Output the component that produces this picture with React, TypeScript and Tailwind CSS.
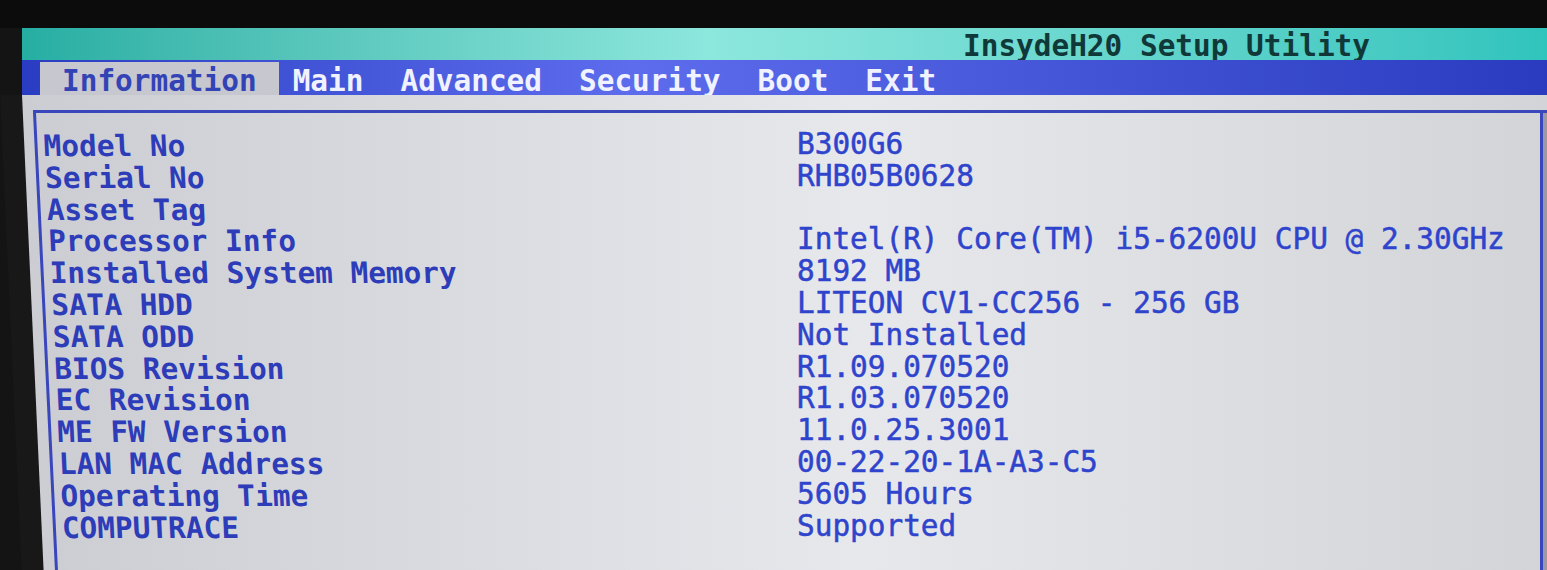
const rows: [string, string][] = [
  ['Model No', 'B300G6'],
  ['Serial No', 'RHB05B0628'],
  ['Asset Tag', ''],
  ['Processor Info', 'Intel(R) Core(TM) i5-6200U CPU @ 2.30GHz'],
  ['Installed System Memory', '8192 MB'],
  ['SATA HDD', 'LITEON CV1-CC256 - 256 GB'],
  ['SATA ODD', 'Not Installed'],
  ['BIOS Revision', 'R1.09.070520'],
  ['EC Revision', 'R1.03.070520'],
  ['ME FW Version', '11.0.25.3001'],
  ['LAN MAC Address', '00-22-20-1A-A3-C5'],
  ['Operating Time', '5605 Hours'],
  ['COMPUTRACE', 'Supported'],
];

const tabs = ['Main', 'Advanced', 'Security', 'Boot', 'Exit'];

export default function App() {
  return (
    <div className="w-[1547px] h-[570px] overflow-hidden bg-[#141414] flex flex-col font-['DejaVu_Sans_Mono',monospace] text-[29.4px] whitespace-pre">
      <div className="h-[28px] shrink-0 bg-[#0c0c0c]" />

      {/* title + menu bar */}
      <div className="ml-[22px] flex flex-col shrink-0">
        <div className="h-[32px] flex items-center pt-[5px] pl-[941px] bg-gradient-to-r from-[#25aea3] via-[#8ce7dd] via-45% to-[#2fc4bd] text-[#103838] font-bold leading-none">
          InsydeH20 Setup Utility
        </div>
        <nav className="h-[35px] flex items-stretch pl-[18px] bg-gradient-to-r from-[#2a3dc2] via-[#5d6ced] via-40% to-[#2a3bbf] font-bold leading-none">
          <div className="flex items-center pt-[6px] px-[22px] mt-[2px] bg-[#c6c7cf] text-[#3343b6]">Information</div>
          <div className="flex items-center pt-[8px] gap-[37px] ml-[14px] text-[#f1f2ff]">
            {tabs.map((t) => (
              <span key={t}>{t}</span>
            ))}
          </div>
        </nav>
      </div>

      {/* info panel */}
      <div className="flex flex-1 min-h-0">
        <div className="w-[22px] shrink-0 bg-[#181818] origin-top skew-x-[2.6deg]" />
        <div className="flex-1 flex flex-col pt-[15px] bg-gradient-to-r from-[#cbcdd2] via-[#e7e8ec] via-55% to-[#d3d4d8]">
          <div className="flex flex-1 ml-[11px] border-t-[3px] border-[#3a46bc]">
            <div className="w-[764px] shrink-0 border-l-[3px] border-[#3a46bc] origin-top skew-x-[2.75deg] pl-[6px] pt-[18px] font-bold text-[#2d3cb8] leading-[31.8px]">
              {rows.map(([label]) => (
                <div key={label}>{label}</div>
              ))}
            </div>
            <div className="flex-1 pt-[16px] text-[#2f44cc] leading-[31.8px] [-webkit-text-stroke:0.5px_#2f44cc]">
              {rows.map(([label, value]) => (
                <div key={label} className="h-[31.8px]">
                  {value}
                </div>
              ))}
            </div>
            <div className="w-[7px] shrink-0 border-l-[3px] border-[#3a46bc] bg-[#9a9ba2]" />
          </div>
        </div>
      </div>
    </div>
  );
}
